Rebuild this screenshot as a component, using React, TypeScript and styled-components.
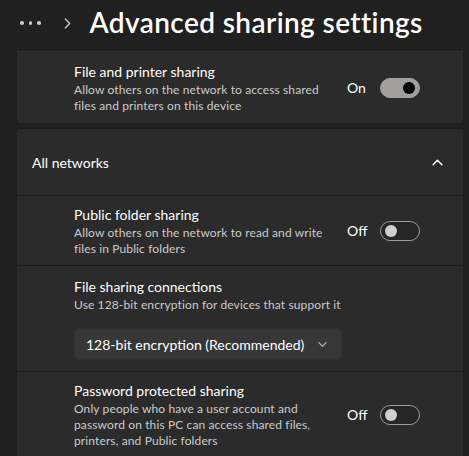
import React from 'react'
import styled, { createGlobalStyle } from 'styled-components'

const GlobalStyle = createGlobalStyle`
  html, body {
    margin: 0;
    padding: 0;
    background: #202020;
    overflow: hidden;
  }
  body {
    font-family: 'Segoe UI', Lato, 'Noto Sans', sans-serif;
    color: #ffffff;
    -webkit-font-smoothing: antialiased;
  }
`

const Page = styled.div`
  width: 469px;
  height: 456px;
  background: #202020;
  overflow: hidden;
`

const Header = styled.div`
  height: 51px;
  display: flex;
  align-items: center;
  padding-left: 20px;
  box-sizing: border-box;
  padding-bottom: 7px;
`

const Dots = styled.div`
  display: flex;
  gap: 5px;
  margin-top: 2px;
  span {
    width: 3.5px;
    height: 3.5px;
    border-radius: 50%;
    background: #c8c8c8;
  }
`

const Crumb = styled.div`
  margin-left: 21px;
  margin-right: 17px;
  display: flex;
  align-items: center;
  margin-top: 2px;
`

const Title = styled.h1`
  margin: 0;
  font-size: 28px;
  font-weight: 600;
  letter-spacing: 0.4px;
  color: #ffffff;
`

const Card = styled.div<{ $flatTop?: boolean }>`
  margin: 0 5px 4px 16px;
  background: #2b2b2b;
  border: 1px solid #1d1d1d;
  border-top-color: ${(p) => (p.$flatTop ? '#333333' : '#1d1d1d')};
  border-radius: ${(p) => (p.$flatTop ? '0 0 4px 4px' : '4px 4px 0 0')};
  overflow: hidden;
`

const Row = styled.div<{ $h: number }>`
  height: ${(p) => p.$h}px;
  display: flex;
  align-items: center;
  padding-left: 57px;
  padding-right: 43px;
  border-top: 1px solid #1d1d1d;
  box-sizing: border-box;
  &:first-child {
    border-top: none;
  }
`

const StackRow = styled.div`
  height: 106px;
  display: flex;
  flex-direction: column;
  padding: 11px 0 0 57px;
  border-top: 1px solid #1d1d1d;
  box-sizing: border-box;
`

const ExpanderHead = styled.div`
  height: 66px;
  display: flex;
  align-items: center;
  justify-content: space-between;
  padding: 0 20px 0 15px;
  font-size: 14px;
  color: #ffffff;
`

const Texts = styled.div`
  flex: 1;
  display: flex;
  flex-direction: column;
`

const RowTitle = styled.div`
  font-size: 14px;
  line-height: 20px;
  color: #ffffff;
`

const RowDesc = styled.div`
  font-size: 12px;
  line-height: 16px;
  letter-spacing: 0.12px;
  color: #cccccc;
`

const State = styled.span`
  font-size: 14px;
  color: #ffffff;
  margin-right: 13px;
  width: 20px;
`

const Toggle = styled.div<{ $on: boolean }>`
  width: 40px;
  height: 20px;
  box-sizing: border-box;
  border-radius: 10px;
  border: 1px solid ${(p) => (p.$on ? '#a19f99' : '#9c9c9c')};
  background: ${(p) => (p.$on ? '#a19f99' : '#262626')};
  display: flex;
  align-items: center;
  justify-content: ${(p) => (p.$on ? 'flex-end' : 'flex-start')};
  padding: 0 4px;
  span {
    width: 12px;
    height: 12px;
    border-radius: 50%;
    background: ${(p) => (p.$on ? '#000000' : '#cfcfcf')};
  }
`

const Select = styled.div`
  margin-top: 15px;
  width: 268px;
  height: 32px;
  box-sizing: border-box;
  background: #373737;
  border: 1px solid #323232;
  border-radius: 4px;
  display: flex;
  align-items: center;
  justify-content: space-between;
  padding: 0 14px 0 11px;
  font-size: 14px;
  color: #ffffff;
`

const Chevron = ({ dir, size = 10, color = '#cfcfcf' }: { dir: 'right' | 'up' | 'down'; size?: number; color?: string }) => {
  const d = dir === 'right' ? 'M3 1 L7 5 L3 9' : dir === 'up' ? 'M1 7 L5 3 L9 7' : 'M1 3 L5 7 L9 3'
  return (
    <svg width={size} height={size} viewBox="0 0 10 10" fill="none">
      <path d={d} stroke={color} strokeWidth="1.3" strokeLinecap="round" strokeLinejoin="round" />
    </svg>
  )
}

function ToggleRow({ title, desc, on, h }: { title: string; desc: string[]; on: boolean; h: number }) {
  return (
    <Row $h={h}>
      <Texts>
        <RowTitle>{title}</RowTitle>
        {desc.map((line) => (
          <RowDesc key={line}>{line}</RowDesc>
        ))}
      </Texts>
      <State>{on ? 'On' : 'Off'}</State>
      <Toggle $on={on}>
        <span />
      </Toggle>
    </Row>
  )
}

export default function App() {
  return (
    <Page>
      <GlobalStyle />
      <Header>
        <Dots>
          <span />
          <span />
          <span />
        </Dots>
        <Crumb>
          <Chevron dir="right" size={11} color="#c8c8c8" />
        </Crumb>
        <Title>Advanced sharing settings</Title>
      </Header>

      <Card $flatTop>
        <ToggleRow
          h={71}
          title="File and printer sharing"
          desc={['Allow others on the network to access shared', 'files and printers on this device']}
          on
        />
      </Card>

      <Card>
        <ExpanderHead>
          All networks
          <Chevron dir="up" size={11} color="#ffffff" />
        </ExpanderHead>
        <ToggleRow
          h={70}
          title="Public folder sharing"
          desc={['Allow others on the network to read and write', 'files in Public folders']}
          on={false}
        />
        <StackRow>
          <RowTitle>File sharing connections</RowTitle>
          <RowDesc>Use 128-bit encryption for devices that support it</RowDesc>
          <Select>
            128-bit encryption (Recommended)
            <Chevron dir="down" size={9} color="#bdbdbd" />
          </Select>
        </StackRow>
        <ToggleRow
          h={86}
          title="Password protected sharing"
          desc={[
            'Only people who have a user account and',
            'password on this PC can access shared files,',
            'printers, and Public folders',
          ]}
          on={false}
        />
      </Card>
    </Page>
  )
}
